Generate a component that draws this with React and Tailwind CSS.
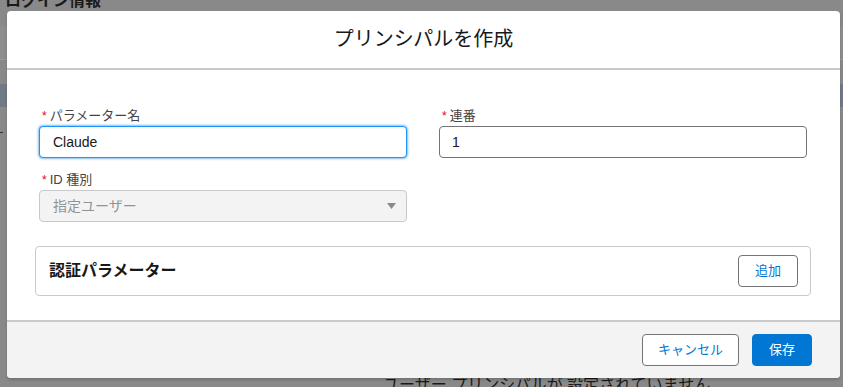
const font = { fontFamily: '"Liberation Sans", "Noto Sans CJK JP", sans-serif' };

function Label({ children }) {
  return (
    <label className="flex items-center text-[13px] leading-[18px] text-[#444444] mb-[1px]">
      <abbr className="no-underline text-[#ea001e] text-[12px] mr-[3px] ml-[3px]">*</abbr>
      {children}
    </label>
  );
}

function Backdrop() {
  // page behind the dimmed overlay
  return (
    <div className="absolute inset-0 bg-[#898989]">
      <div className="absolute left-[5px] top-[-9px] text-[16px] leading-[20px] font-bold text-[#1a1a1a]">ログイン情報</div>
      <div className="absolute left-0 right-0 top-[26px] h-[33px] bg-[#8d8d8d]" />
      <div className="absolute left-0 right-0 top-[59px] h-px bg-[#9a9a9a]" />
      <div className="absolute left-0 right-0 top-[84px] h-[23px] bg-[#717a85]" />
      <div className="absolute left-0 top-[132px] w-[3px] h-px bg-[#333]" />
      <div className="absolute left-[383px] top-[375px] text-[16px] leading-[20px] text-[#1a1a1a] whitespace-nowrap">
        ユーザー プリンシパルが 設定されていません
      </div>
    </div>
  );
}

export default function App() {
  return (
    <div className="relative w-full h-[387px] overflow-hidden" style={font}>
      <Backdrop />

      <div className="relative ml-[7px] mt-[11px] w-[833px] rounded-[4px] bg-white shadow-[0_2px_3px_rgba(0,0,0,0.16)] overflow-hidden">
        {/* Header */}
        <div className="h-[59px] flex items-center justify-center border-b-2 border-[#c9c9c9]">
          <h2 className="text-[20px] leading-[25px] text-[#181818] font-normal">プリンシパルを作成</h2>
        </div>

        {/* Body */}
        <div className="h-[250px] pt-[37px] pl-[32px] pr-[33px]">
          <div className="grid grid-cols-2 gap-x-[32px]">
            <div className="mb-[13px]">
              <Label>パラメーター名</Label>
              <input
                defaultValue="Claude"
                className="w-full h-[32px] px-[13px] text-[14px] text-[#181818] bg-white border border-[#1b96ff] rounded-[4px] shadow-[0_0_3px_#0176d3] outline-none"
                style={font}
              />
            </div>
            <div className="mb-[13px]">
              <Label>連番</Label>
              <input
                defaultValue="1"
                className="w-full h-[32px] px-[12px] text-[14px] text-[#181818] bg-white border border-[#747474] rounded-[4px] outline-none"
                style={font}
              />
            </div>
            <div>
              <Label>ID 種別</Label>
              <div className="relative h-[32px] flex items-center px-[13px] text-[14px] text-[#939393] bg-[#f3f3f3] border border-[#c9c9c9] rounded-[4px]">
                指定ユーザー
                <svg className="absolute right-[10px] top-[12px]" width="9" height="6" viewBox="0 0 9 6">
                  <path d="M0 0h9L4.5 6z" fill="#8a8a8a" />
                </svg>
              </div>
            </div>
            <div />
          </div>

          <div className="mt-[24px] -ml-[4px] -mr-[4px] h-[50px] flex items-center justify-between pl-[13px] pr-[12px] border border-[#c9c9c9] rounded-[4px]">
            <h3 className="text-[16px] font-bold text-[#181818]">認証パラメーター</h3>
            <button className="h-[32px] w-[60px] text-[13px] text-[#0176d3] bg-white border border-[#747474] rounded-[4px]">
              追加
            </button>
          </div>
        </div>

        {/* Footer */}
        <div className="h-[58px] flex items-center justify-end gap-[13px] pr-[28px] bg-[#f3f3f3] border-t-2 border-[#c9c9c9]">
          <button className="h-[32px] w-[97px] text-[13px] text-[#0176d3] bg-white border border-[#747474] rounded-[4px]">
            キャンセル
          </button>
          <button className="h-[32px] w-[60px] text-[13px] text-white bg-[#0176d3] border border-[#0176d3] rounded-[4px]">
            保存
          </button>
        </div>
      </div>
    </div>
  );
}
